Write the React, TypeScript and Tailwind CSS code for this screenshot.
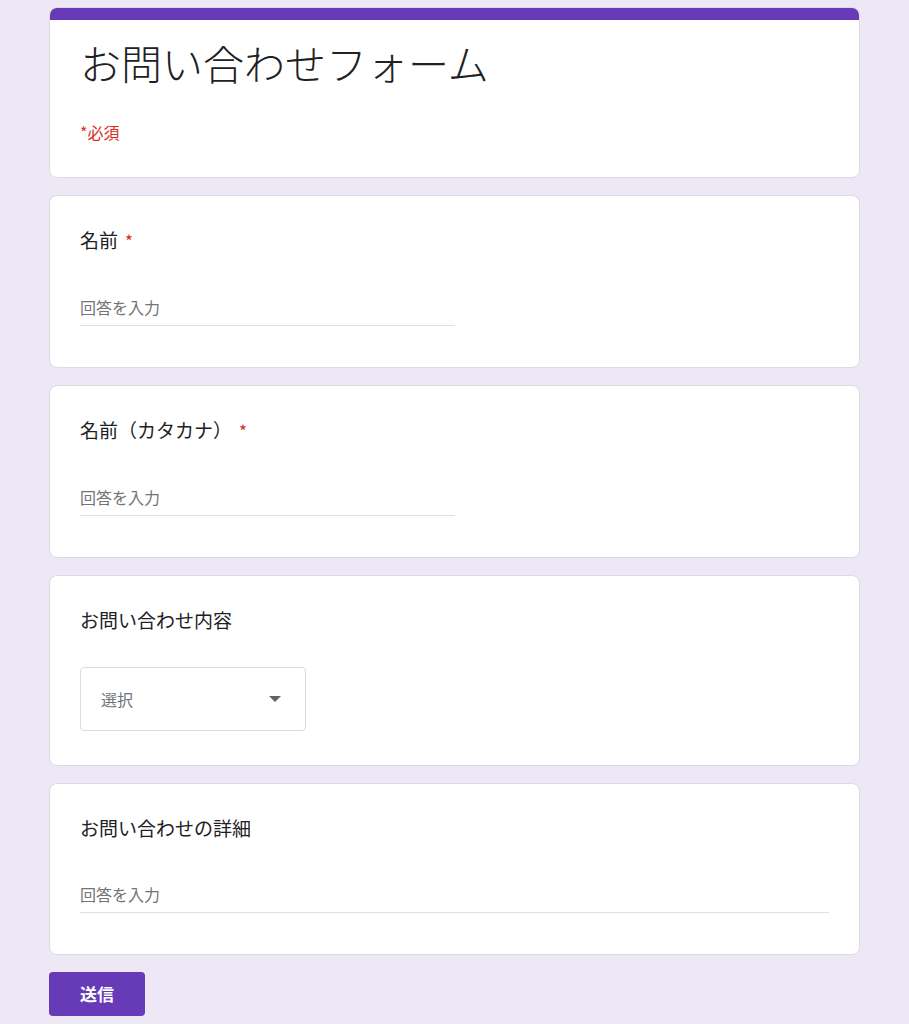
import React from "react";

const font = {
  fontFamily: '"Noto Sans CJK JP", "Noto Sans", Roboto, sans-serif',
};

function Required() {
  return <span className="ml-[7px] text-[#d93025] text-[17px]">*</span>;
}

function TextQuestion({ label, required, wide }: { label: string; required?: boolean; wide?: boolean }) {
  return (
    <div className="rounded-lg border border-[#dadce0] bg-white px-[30px] pt-[30px] pb-[41px]">
      <div className="text-[19px] leading-[28px] text-[#202124]">
        {label}
        {required && <Required />}
      </div>
      <div
        className={`mt-[40px] border-b border-[#e0e0e0] pb-[6px] text-[16px] leading-[24px] text-[#70757a] ${
          wide ? "w-full" : "w-[375px]"
        }`}
      >
        回答を入力
      </div>
    </div>
  );
}

export default function App() {
  return (
    <div className="min-h-[1024px] bg-[#ede7f6] pt-[7px]" style={font}>
      <div className="mx-auto flex w-[811px] flex-col gap-[17px]">
        <div className="overflow-hidden rounded-lg border border-[#dadce0] bg-white">
          <div className="-mx-px -mt-px h-[13px] bg-[#673ab7]" />
          <div className="px-[30px] pt-[18px] pb-[33px]">
            <h1 className="text-[41px] font-light leading-[48px] text-[#202124]">お問い合わせフォーム</h1>
            <div className="mt-[34px] text-[16px] leading-[24px] text-[#d93025]">*必須</div>
          </div>
        </div>

        <TextQuestion label="名前" required />
        <TextQuestion label="名前（カタカナ）" required />

        <div className="rounded-lg border border-[#dadce0] bg-white px-[30px] pt-[30px] pb-[34px]">
          <div className="text-[19px] leading-[28px] text-[#202124]">お問い合わせ内容</div>
          <div className="mt-[33px] flex h-[64px] w-[226px] items-center justify-between rounded border border-[#dadce0] pl-[20px] pr-[24px]">
            <span className="text-[16px] text-[#70757a]">選択</span>
            <svg width="12" height="6" viewBox="0 0 10 5">
              <path d="M0 0 L5 5 L10 0 Z" fill="#5f6368" />
            </svg>
          </div>
        </div>

        <TextQuestion label="お問い合わせの詳細" wide />

        <div>
          <button className="h-[44px] w-[96px] rounded bg-[#673ab7] text-[17px] font-bold text-white">
            送信
          </button>
        </div>
      </div>
    </div>
  );
}
